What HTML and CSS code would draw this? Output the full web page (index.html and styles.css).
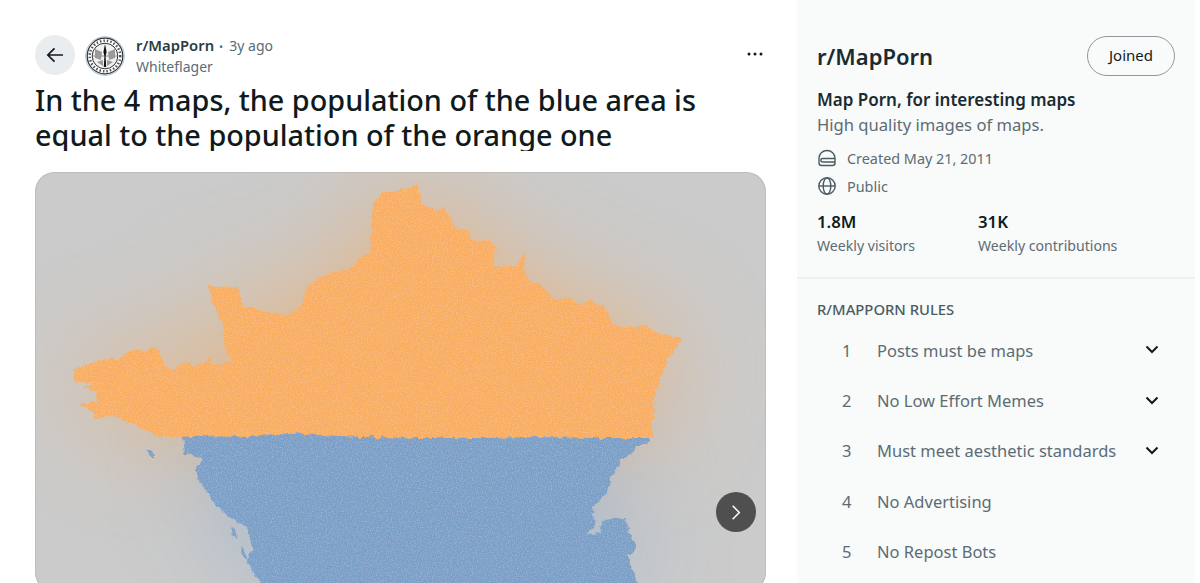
FILE: index.html
```html
<!DOCTYPE html>
<html lang="en">
<head>
<meta charset="utf-8">
<title>r/MapPorn</title>
<link rel="stylesheet" href="styles.css">
</head>
<body>
<div class="page">
  <main class="post">
    <header class="post-head">
      <button class="back" aria-label="Back">
        <svg class="back-icon" viewBox="0 0 20 20"><path d="M18 10H3M9.500 3.300 2.800 10l6.700 6.700"/></svg>
      </button>
      <svg class="avatar" viewBox="0 0 40 40">
        <circle class="av-ring" cx="20" cy="20" r="19.300"/>
        <circle class="av-band" cx="20" cy="20" r="17.800"/>
        <circle class="av-inner" cx="20" cy="20" r="12.800"/>
        <circle class="av-dash" cx="20" cy="20" r="15.300"/>
        <path class="av-line" d="M7.500 20h25"/>
        <path class="av-soft" d="M10 13l7 3-1 8-6-2zM30 13l-7 3 1 8 6-2zM12 26l6-2v6zM28 26l-6-2v6z"/>
        <path class="av-fig" d="M20 8l1.600 8-1 4 .6 11h-2.400l.6-11-1-4z"/>
      </svg>
      <div class="meta">
        <div class="meta-top"><span class="sub">r/MapPorn</span><span class="age"><span class="dot">•</span>3y ago</span></div>
        <div class="author">Whiteflager</div>
      </div>
      <button class="more" aria-label="More">
        <svg class="more-icon" viewBox="0 0 16 4"><circle cx="2" cy="2" r="1.500"/><circle cx="8" cy="2" r="1.500"/><circle cx="14" cy="2" r="1.500"/></svg>
      </button>
    </header>
    <h1 class="title">In the 4 maps, the population of the blue area is equal to the population of the orange one</h1>
    <div class="media">
      <svg class="map" viewBox="35 172 731 411" preserveAspectRatio="xMidYMin slice">
        <defs>
          <filter id="glow" x="-40%" y="-40%" width="180%" height="180%"><feGaussianBlur stdDeviation="52"/></filter>
          <filter id="land" x="-5%" y="-5%" width="110%" height="110%">
            <feTurbulence type="fractalNoise" baseFrequency="0.16" numOctaves="4" seed="4" result="n"/>
            <feDisplacementMap in="SourceGraphic" in2="n" scale="6" xChannelSelector="R" yChannelSelector="G" result="d"/>
            <feTurbulence type="fractalNoise" baseFrequency="0.8" numOctaves="2" seed="9" result="s"/>
            <feColorMatrix in="s" type="matrix" values="0 0 0 0 1  0 0 0 0 1  0 0 0 0 1  0 0 0 0.400 -0.170" result="w"/>
            <feComposite in="w" in2="d" operator="in" result="sp"/>
            <feMerge><feMergeNode in="d"/><feMergeNode in="sp"/></feMerge>
          </filter>
          <path id="north" d="M74 370 90 364 112 357 116 361 132 350 145 350 155 347 163 360 172 372 180 364 187 362 196 366 205 363 210 358 212 365 233 362 225 350 223 327 212 303 208 285 227 288 238 287 243 308 252 308 270 313 287 316 303 305 303 298 307 287 323 275 350 268 370 250 373 203 383 193 410 187 417 185 422 203 435 212 443 207 450 215 453 227 468 230 472 240 490 242 495 247 493 267 517 267 522 255 527 253 523 267 528 280 543 287 555 300 570 298 582 305 590 300 605 307 613 325 630 327 647 325 657 333 682 339 667 360 653 400 655 410 652 427 653 438 600 438 540 437 480 438 420 438 360 437 300 434 285 433 250 437 200 436 180 437 157 437 142 427 112 415 95 420 92 412 78 405 97 400 98 392 83 388 95 382 75 383Z"/>
          <path id="south" d="M183 436 300 434 420 438 540 437 650 438 650 440 648 445 637 445 632 453 622 460 610 480 608 492 593 507 595 527 586 535 600 533 603 520 625 518 630 533 637 548 627 557 634 573 639 590 265 590 246 560 253 547 246 527 229 517 214 503 200 483 195 470 205 457 185 455Z"/>
        </defs>
        <use href="#north" class="glow-o" filter="url(#glow)"/>
        <use href="#south" class="glow-b" filter="url(#glow)"/>
        <g filter="url(#land)">
          <use href="#south" class="blue"/>
          <path class="blue" d="M146 450l6 2 3 4-5 0zM231 527l4 2 2 10-4-3zM240 545l4 3 3 14-4-6z"/>
          <use href="#north" class="orange"/>
        </g>
      </svg>
      <button class="next" aria-label="Next">
        <svg class="next-icon" viewBox="0 0 12 20"><path d="M2 2l8 8-8 8"/></svg>
      </button>
    </div>
  </main>
  <aside class="side">
    <section class="about">
      <div class="about-head">
        <h2 class="side-title">r/MapPorn</h2>
        <button class="joined">Joined</button>
      </div>
      <div class="tagline">Map Porn, for interesting maps</div>
      <div class="desc">High quality images of maps.</div>
      <div class="facts">
        <div class="fact">
          <svg class="fact-icon" viewBox="0 0 20 20"><path d="M2 10a8 7.500 0 0 1 16 0v5a2.500 2.500 0 0 1-2.500 2.500h-11A2.500 2.500 0 0 1 2 15z"/><path d="M18 10.500H5.500a1.700 1.700 0 0 0 0 3.500H18"/></svg>
          <span>Created May 21, 2011</span>
        </div>
        <div class="fact">
          <svg class="fact-icon" viewBox="0 0 20 20"><circle cx="10" cy="10" r="8.200"/><ellipse cx="10" cy="10" rx="3.800" ry="8.200"/><path d="M2 10h16"/></svg>
          <span>Public</span>
        </div>
      </div>
      <div class="stats">
        <div class="stat stat-a"><div class="stat-num">1.8M</div><div class="stat-label">Weekly visitors</div></div>
        <div class="stat"><div class="stat-num">31K</div><div class="stat-label">Weekly contributions</div></div>
      </div>
    </section>
    <section class="rules">
      <h3 class="rules-title">R/MAPPORN RULES</h3>
      <ol class="rule-list">
        <li class="rule"><span class="rule-num">1</span><span class="rule-text">Posts must be maps</span><svg class="chev" viewBox="0 0 14 9"><path d="M1.500 1.500 7 7l5.500-5.500"/></svg></li>
        <li class="rule"><span class="rule-num">2</span><span class="rule-text">No Low Effort Memes</span><svg class="chev" viewBox="0 0 14 9"><path d="M1.500 1.500 7 7l5.500-5.500"/></svg></li>
        <li class="rule"><span class="rule-num">3</span><span class="rule-text">Must meet aesthetic standards</span><svg class="chev" viewBox="0 0 14 9"><path d="M1.500 1.500 7 7l5.500-5.500"/></svg></li>
        <li class="rule"><span class="rule-num">4</span><span class="rule-text">No Advertising</span></li>
        <li class="rule"><span class="rule-num">5</span><span class="rule-text">No Repost Bots</span></li>
      </ol>
    </section>
  </aside>
</div>
</body>
</html>
```
FILE: styles.css
```css
* { box-sizing: border-box; }
html, body { margin: 0; padding: 0; background: #fff; }
body { font-family: "Noto Sans", "Open Sans", sans-serif; color: #0f1a1c; overflow: hidden; }
button { font: inherit; border: 0; background: none; padding: 0; }
.page { display: flex; width: 1200px; height: 583px; overflow: hidden; }

.post { width: 797px; flex: none; padding: 35px 31px 0 35px; }
.post-head { display: flex; align-items: flex-start; height: 47px; }
.back { width: 40px; height: 40px; border-radius: 50%; background: #eaedef; display: flex; align-items: center; justify-content: center; flex: none; }
.back-icon { width: 20px; height: 20px; fill: none; stroke: #0f1a1c; stroke-width: 1.700; }
.avatar { width: 40px; height: 40px; margin: 1px 0 0 10px; flex: none; }
.av-ring { fill: #fff; stroke: #a9c3dc; stroke-width: 1; }
.av-band { fill: #fff; stroke: #333; stroke-width: 1.200; }
.av-inner { fill: #f2f2f2; stroke: #333; stroke-width: 1; }
.av-dash { fill: none; stroke: #555; stroke-width: 2.500; stroke-dasharray: 1.500 2; }
.av-line { stroke: #666; stroke-width: .7; }
.av-fig { fill: #111; }
.av-soft { fill: #9a9a9a; }
.meta { margin-left: 11px; }
.meta-top { display: flex; align-items: baseline; font-size: 14px; line-height: 20px; }
.sub { font-size: 14.800px; font-weight: 600; color: #2a3c42; }
.age { color: #5c6c74; margin-left: 5px; }
.dot { font-size: 11px; margin-right: 6px; }
.author { font-size: 14px; line-height: 20px; color: #5c6c74; }
.more { margin-left: auto; margin-top: 17px; margin-right: 3px; display: flex; }
.more-icon { width: 16px; height: 4px; fill: #0f1a1c; }
.title { margin: 0; font-size: 28.800px; line-height: 35px; height: 69px; overflow: hidden; font-weight: 500; color: #0f1a1c; }
.media { position: relative; margin-top: 21px; height: 420px; border-radius: 20px; overflow: hidden; background: #cbcbcb; box-shadow: inset 0 0 0 1px #bdbdbd; }
.map { display: block; width: 731px; height: 411px; }
.glow-o { fill: #f2a65a; opacity: .6; }
.glow-b { fill: #7fa3cc; opacity: .45; }
.orange { fill: #f9ad5f; }
.blue { fill: #7a9fc7; }
.next { position: absolute; right: 10px; top: 320px; width: 40px; height: 40px; border-radius: 50%; background: #4f4f4f; display: flex; align-items: center; justify-content: center; }
.next-icon { width: 10px; height: 17px; fill: none; stroke: #fff; stroke-width: 1.800; }

.side { width: 398px; flex: none; background: #f9fafa; padding-top: 36px; margin-right: 5px; }
.about { padding: 0 20px 20px; border-bottom: 2px solid #eff1f1; height: 243px; }
.about-head { display: flex; align-items: center; justify-content: space-between; height: 40px; }
.side-title { margin: 0; font-size: 22px; line-height: 42px; font-weight: 600; color: #1a2b31; }
.joined { width: 88px; height: 40px; border: 1px solid #8c9a9f; border-radius: 20px; font-size: 15px; line-height: 36px; padding-bottom: 2px; color: #0f1a1c; }
.tagline { margin-top: 13px; font-size: 17px; line-height: 22px; font-weight: 600; color: #1a2b31; }
.desc { margin-top: 3px; font-size: 16.600px; line-height: 22px; color: #5c6c74; }
.facts { margin-top: 11px; display: flex; flex-direction: column; gap: 6px; }
.fact { display: flex; align-items: center; height: 22px; font-size: 14.400px; color: #5c6c74; }
.fact-icon { width: 20px; height: 20px; margin-right: 10px; fill: none; stroke: #4a5c63; stroke-width: 1.400; flex: none; }
.stats { display: flex; margin-top: 14px; }
.stat-a { width: 161px; }
.stat-num { font-size: 16.800px; line-height: 22px; font-weight: 600; color: #0f1a1c; }
.stat-label { font-size: 14.100px; line-height: 20px; margin-top: 3px; color: #5c6c74; }
.rules { padding: 19px 20px 0; }
.rules-title { margin: 0; font-size: 14.800px; line-height: 22px; font-weight: 500; color: #4a5c63; }
.rule-list { list-style: none; margin: 5px 0 0; padding: 0; }
.rule { display: flex; align-items: center; height: 50.400px; font-size: 16.500px; color: #5c6c74; }
.rule-num { width: 60px; padding-left: 25px; flex: none; }
.rule-text { flex: 1; }
.chev { width: 14px; height: 9px; margin-right: 16px; margin-bottom: 1px; fill: none; stroke: #0f1a1c; stroke-width: 2; flex: none; }
```
